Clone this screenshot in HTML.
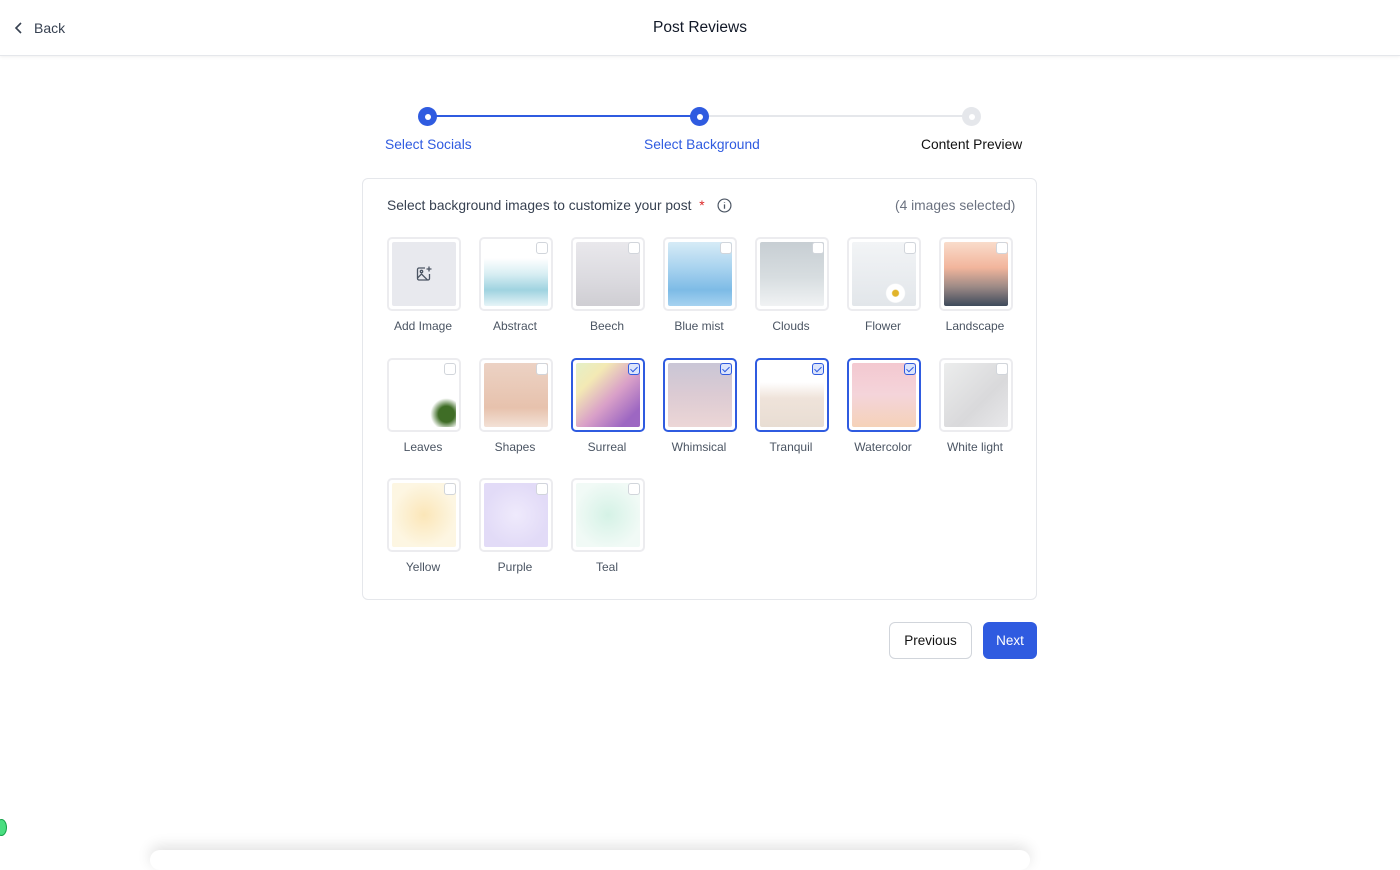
<!DOCTYPE html>
<html><head><meta charset="utf-8"><style>
*{box-sizing:border-box;margin:0;padding:0}
body{width:1400px;height:850px;background:#fff;font-family:"Liberation Sans",sans-serif;position:relative;overflow:hidden;color:#1f2937}
.hdr{position:absolute;top:0;left:0;width:1400px;height:56px;border-bottom:1px solid #e5e7eb;box-shadow:0 1px 3px rgba(0,0,0,.06)}
.back{position:absolute;left:14px;top:20px;font-size:14px;color:#374151;display:flex;align-items:center;gap:10px}
.title{position:absolute;top:19px;width:100%;text-align:center;font-size:15.5px;color:#111827}
.line{position:absolute;top:115px;height:2px}
.dot{position:absolute;top:107px;width:19px;height:19px;border-radius:50%;background:#2f5be0}
.dot::after{content:"";position:absolute;left:6.5px;top:6.5px;width:6px;height:6px;border-radius:50%;background:#fff}
.dot.off{background:#e5e7eb}
.sl{position:absolute;top:137px;font-size:13.8px}
.card{position:absolute;left:362px;top:178px;width:675px;height:422px;border:1px solid #e5e7eb;border-radius:6px}
.q{position:absolute;left:387px;top:198px;font-size:13.8px;color:#374151}
.tile{position:absolute;width:74px;height:74px;border:2px solid #ececef;border-radius:5px;background:#fff}
.tile .im{position:absolute;left:3px;top:3px;right:3px;bottom:3px;border-radius:2px}
.tile.sel{border-color:#2f5be0}
.cb{position:absolute;right:3px;top:3px;width:12px;height:12px;border:1px solid #d1d5db;border-radius:3px;background:#fff}
.sel .cb{border-color:#2f5be0;background:#dbe4fb}
.sel .cb::after{content:"";position:absolute;left:3px;top:1px;width:3px;height:6px;border:solid #2f5be0;border-width:0 1.5px 1.5px 0;transform:rotate(45deg)}
.lb{position:absolute;width:92px;text-align:center;font-size:12px;color:#4b5563}
.btn{position:absolute;top:622px;height:37px;border-radius:6px;font-size:13.5px;display:flex;align-items:center;justify-content:center}
</style></head><body>
<div class="hdr">
 <div class="back"><svg width="10" height="12" viewBox="0 0 10 12"><path d="M7 1L2 6l5 5" fill="none" stroke="#374151" stroke-width="1.6"/></svg>Back</div>
 <div class="title">Post Reviews</div>
</div>
<div class="line" style="left:427px;width:272px;background:#2f5be0"></div>
<div class="line" style="left:699px;width:272px;background:#e5e7eb"></div>
<div class="dot" style="left:418px"></div>
<div class="dot" style="left:690px"></div>
<div class="dot off" style="left:962px"></div>
<div class="sl" style="left:385px;color:#2f5be0">Select Socials</div>
<div class="sl" style="left:644px;color:#2f5be0">Select Background</div>
<div class="sl" style="left:921px;color:#111">Content Preview</div>
<div class="card"></div>
<div class="q">Select background images to customize your post <span style="color:#dc2626;margin-left:4px">*</span>
<svg style="vertical-align:-3px;margin-left:8px" width="15" height="15" viewBox="0 0 14 14"><circle cx="7" cy="7" r="6" fill="none" stroke="#4b5563" stroke-width="1.1"/><path d="M7 6v4M7 4v.5" stroke="#4b5563" stroke-width="1.2"/></svg></div>
<div class="q" style="left:895px;color:#6b7280">(4 images selected)</div>

<div class="tile" style="left:387px;top:237px"><div class="im" style="background:#e8e9ee;display:flex;align-items:center;justify-content:center"><svg width="18" height="18" viewBox="0 0 18 18" fill="none" stroke="#4b5563" stroke-width="1.3"><path d="M10 3H4a1.5 1.5 0 0 0-1.5 1.5v9A1.5 1.5 0 0 0 4 15h9a1.5 1.5 0 0 0 1.5-1.5V9"/><path d="M2.5 13l4-4 6 6"/><circle cx="6.5" cy="6.5" r="1.2"/><path d="M14 1.5v5M11.5 4h5"/></svg></div></div>
<div class="lb" style="left:377px;top:319px">Add Image</div>

<div class="tile" style="left:479px;top:237px"><div class="im" style="background:linear-gradient(#fff 25%,#d8eef3 50%,#9fd3e0 75%,#e6f4f7)"></div><div class="cb"></div></div>
<div class="lb" style="left:469px;top:319px">Abstract</div>
<div class="tile" style="left:571px;top:237px"><div class="im" style="background:linear-gradient(#e9e8ec,#dcdbe0 55%,#cfced3)"></div><div class="cb"></div></div>
<div class="lb" style="left:561px;top:319px">Beech</div>
<div class="tile" style="left:663px;top:237px"><div class="im" style="background:linear-gradient(#d6ebf6,#a9d3ef 40%,#7dbbe6 75%,#a6d2f0)"></div><div class="cb"></div></div>
<div class="lb" style="left:653px;top:319px">Blue mist</div>
<div class="tile" style="left:755px;top:237px"><div class="im" style="background:linear-gradient(#c7ced3,#d7dde0 55%,#f0f2f3)"></div><div class="cb"></div></div>
<div class="lb" style="left:745px;top:319px">Clouds</div>
<div class="tile" style="left:847px;top:237px"><div class="im" style="background:radial-gradient(circle at 68% 80%,#e1b42b 3px,#fff 4px,#fff 9px,transparent 10px),linear-gradient(#f2f4f6,#e2e6ea)"></div><div class="cb"></div></div>
<div class="lb" style="left:837px;top:319px">Flower</div>
<div class="tile" style="left:939px;top:237px"><div class="im" style="background:linear-gradient(#f9dccb,#f2b59c 40%,#9d8a86 70%,#3e4a5b)"></div><div class="cb"></div></div>
<div class="lb" style="left:929px;top:319px">Landscape</div>

<div class="tile" style="left:387px;top:358px"><div class="im" style="background:radial-gradient(circle at 85% 80%,#3f6d26 8px,transparent 16px),#fff"></div><div class="cb"></div></div>
<div class="lb" style="left:377px;top:440px">Leaves</div>
<div class="tile" style="left:479px;top:358px"><div class="im" style="background:linear-gradient(#ecd2c4,#e7c2ad 70%,#f3e1d6)"></div><div class="cb"></div></div>
<div class="lb" style="left:469px;top:440px">Shapes</div>
<div class="tile sel" style="left:571px;top:358px"><div class="im" style="background:linear-gradient(135deg,#e4f0c8,#f3e9b4 25%,#d9a0c8 55%,#9d67c2 85%),#c9b"></div><div class="cb"></div></div>
<div class="lb" style="left:561px;top:440px">Surreal</div>
<div class="tile sel" style="left:663px;top:358px"><div class="im" style="background:linear-gradient(#c9c6d6,#dccbd3 50%,#ecd6d6)"></div><div class="cb"></div></div>
<div class="lb" style="left:653px;top:440px">Whimsical</div>
<div class="tile sel" style="left:755px;top:358px"><div class="im" style="background:linear-gradient(#fff 30%,#efe3da 55%,#e8ddd3)"></div><div class="cb"></div></div>
<div class="lb" style="left:745px;top:440px">Tranquil</div>
<div class="tile sel" style="left:847px;top:358px"><div class="im" style="background:linear-gradient(#f3c8d0,#f4d4da 50%,#f5d2b8)"></div><div class="cb"></div></div>
<div class="lb" style="left:837px;top:440px">Watercolor</div>
<div class="tile" style="left:939px;top:358px"><div class="im" style="background:linear-gradient(135deg,#eceded,#d9d9db 60%,#e8e8ea)"></div><div class="cb"></div></div>
<div class="lb" style="left:929px;top:440px">White light</div>

<div class="tile" style="left:387px;top:478px"><div class="im" style="background:radial-gradient(circle,#fbe6b8,#fdf6e2 70%)"></div><div class="cb"></div></div>
<div class="lb" style="left:377px;top:560px">Yellow</div>
<div class="tile" style="left:479px;top:478px"><div class="im" style="background:radial-gradient(circle,#efeafc,#e2dbf7 70%)"></div><div class="cb"></div></div>
<div class="lb" style="left:469px;top:560px">Purple</div>
<div class="tile" style="left:571px;top:478px"><div class="im" style="background:radial-gradient(circle,#d5f2e6,#f1faf6 75%)"></div><div class="cb"></div></div>
<div class="lb" style="left:561px;top:560px">Teal</div>

<div class="btn" style="left:889px;width:83px;border:1px solid #d1d5db;color:#111">Previous</div>
<div class="btn" style="left:983px;width:54px;background:#2f5be0;color:#fff">Next</div>
<div style="position:absolute;left:-4px;top:819px;width:11px;height:17px;border-radius:50%;background:#4ade80;border:1px solid #16a34a"></div>
<div style="position:absolute;left:150px;top:850px;width:880px;height:20px;box-shadow:0 -4px 14px rgba(0,0,0,.12);border-radius:10px"></div>
</body></html>
